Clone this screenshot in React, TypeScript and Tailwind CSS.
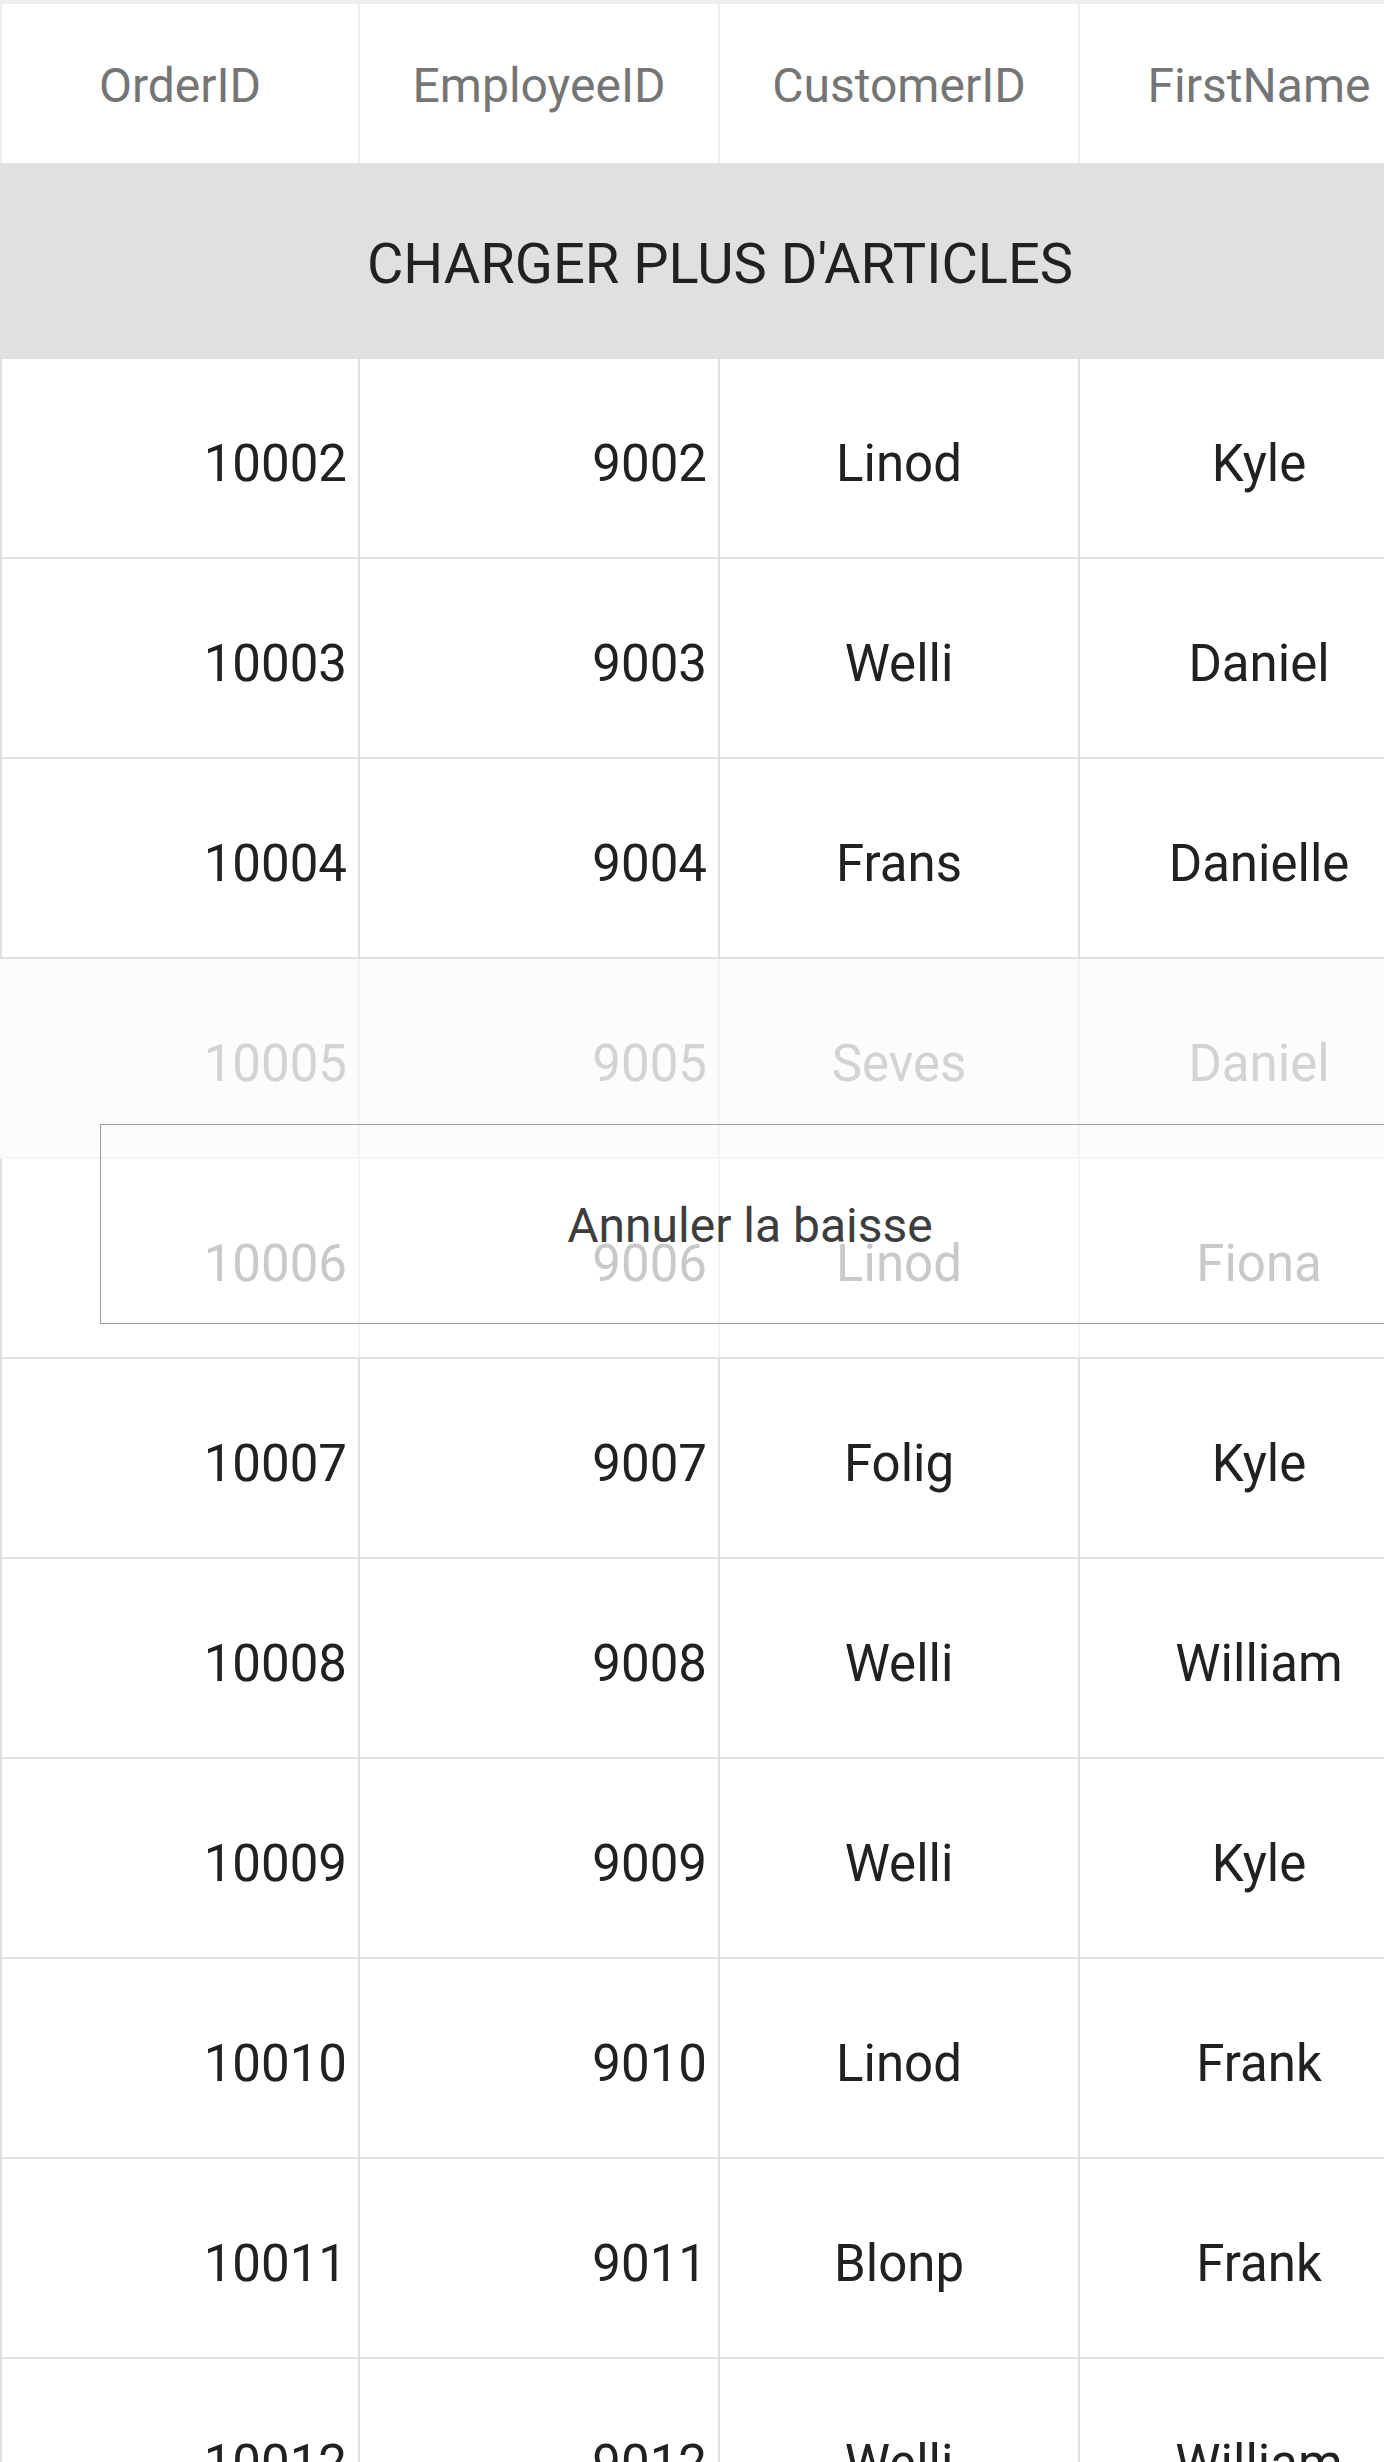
import React from "react";

type Row = { order: string; emp: string; cust: string; first: string; faded?: 1 | 2 };

const rows: Row[] = [
  { order: "10002", emp: "9002", cust: "Linod", first: "Kyle" },
  { order: "10003", emp: "9003", cust: "Welli", first: "Daniel" },
  { order: "10004", emp: "9004", cust: "Frans", first: "Danielle" },
  { order: "10005", emp: "9005", cust: "Seves", first: "Daniel", faded: 1 },
  { order: "10006", emp: "9006", cust: "Linod", first: "Fiona", faded: 2 },
  { order: "10007", emp: "9007", cust: "Folig", first: "Kyle" },
  { order: "10008", emp: "9008", cust: "Welli", first: "William" },
  { order: "10009", emp: "9009", cust: "Welli", first: "Kyle" },
  { order: "10010", emp: "9010", cust: "Linod", first: "Frank" },
  { order: "10011", emp: "9011", cust: "Blonp", first: "Frank" },
  { order: "10012", emp: "9012", cust: "Welli", first: "William" },
];

const headers = ["OrderID", "EmployeeID", "CustomerID", "FirstName"];

function DataRow({ r }: { r: Row }) {
  const text =
    r.faded === 1 ? "text-[#d3d3d3]" : r.faded === 2 ? "text-[#c9c9c9]" : "text-[#212121]";
  const line = r.faded ? "border-[#f3f3f3]" : "border-[#e0e0e0]";
  const rowBorder = r.faded === 1 ? "border-b-[#f5f5f5]" : "border-b-[#e0e0e0]";
  const bg = r.faded === 1 ? "bg-[#fcfcfc]" : "bg-white";
  const left = r.faded === 1 ? "border-l-transparent" : "border-l-[#e0e0e0]";
  return (
    <div className={`flex h-[200px] border-b-2 ${rowBorder} ${bg} ${text} text-[51px]`}>
      <div className={`w-[360px] shrink-0 flex items-center justify-end pt-[12px] pr-[11px] border-r-2 border-l-2 ${line} ${left}`}>
        {r.order}
      </div>
      <div className={`w-[360px] shrink-0 flex items-center justify-end pt-[12px] pr-[11px] border-r-2 ${line}`}>
        {r.emp}
      </div>
      <div className={`w-[360px] shrink-0 flex items-center justify-center pt-[12px] border-r-2 ${line}`}>
        {r.cust}
      </div>
      <div className={`w-[360px] shrink-0 flex items-center justify-center pt-[12px] border-r-2 ${line}`}>
        {r.first}
      </div>
    </div>
  );
}

export default function App() {
  return (
    <div
      className="relative w-[1384px] h-[2462px] overflow-hidden bg-white"
      style={{ fontFamily: "Roboto, 'Noto Sans', sans-serif" }}
    >
      <div className="w-[1440px]">
        <div className="flex h-[163px] border-t-4 border-[#eeeeee] bg-white">
          {headers.map((h, i) => (
            <div
              key={h}
              className={`w-[360px] shrink-0 flex items-center justify-center pt-[4px] border-r-2 border-[#eeeeee] text-[48px] text-[#757575] ${i === 0 ? "border-l-2" : ""}`}
            >
              {h}
            </div>
          ))}
        </div>
        <div className="h-[196px] bg-[#e0e0e0] flex items-center justify-center pt-[6px] text-[56px] text-[#212121]">
          CHARGER PLUS D'ARTICLES
        </div>
        {rows.map((r) => (
          <DataRow key={r.order} r={r} />
        ))}
      </div>

      <div className="absolute left-[100px] top-[1124px] w-[1300px] h-[200px] border border-[#9e9e9e] flex items-center justify-center pt-[4px] text-[48px] text-[#3d3d3d]">
        Annuler la baisse
      </div>
    </div>
  );
}
